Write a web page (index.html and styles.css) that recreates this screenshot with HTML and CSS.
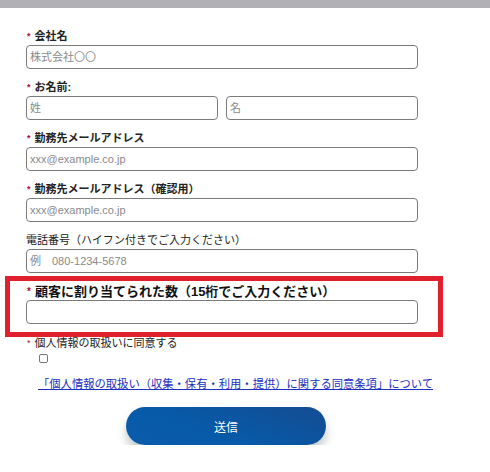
FILE: index.html
```html
<!DOCTYPE html>
<html lang="ja">
<head>
  <meta charset="UTF-8">
  <meta name="viewport" content="width=device-width, initial-scale=1.0">
  <title>お問い合わせ</title>
  <link rel="stylesheet" href="styles.css">
</head>
<body>
  <div class="topbar"></div>
  <form class="form">
    <div class="field">
      <label class="label"><span class="req">*</span>会社名</label>
      <input class="input" type="text" placeholder="株式会社〇〇">
    </div>
    <div class="field">
      <label class="label"><span class="req">*</span>お名前:</label>
      <div class="name-row">
        <input class="input" type="text" placeholder="姓">
        <input class="input" type="text" placeholder="名">
      </div>
    </div>
    <div class="field">
      <label class="label"><span class="req">*</span>勤務先メールアドレス</label>
      <input class="input" type="email" placeholder="xxx@example.co.jp">
    </div>
    <div class="field">
      <label class="label"><span class="req">*</span>勤務先メールアドレス（確認用）</label>
      <input class="input" type="email" placeholder="xxx@example.co.jp">
    </div>
    <div class="field field-tight">
      <label class="label label-plain">電話番号（ハイフン付きでご入力ください）</label>
      <input class="input" type="tel" placeholder="例　080-1234-5678">
    </div>
    <div class="highlight">
      <label class="label label-big"><span class="req">*</span>顧客に割り当てられた数（15桁でご入力ください）</label>
      <input class="input" type="text">
    </div>
    <div class="consent">
      <label class="label label-plain"><span class="req">*</span>個人情報の取扱いに同意する</label>
      <input class="check" type="checkbox">
      <a class="policy" href="#">「個人情報の取扱い（収集・保有・利用・提供）に関する同意条項」について</a>
    </div>
    <button class="submit" type="button">送信</button>
  </form>
</body>
</html>
```

FILE: styles.css
```css
*{
  margin:0;
  padding:0;
  box-sizing:border-box;
}
body{
  background:#fff;
  font-family:"Liberation Sans","Noto Sans CJK JP",sans-serif;
  font-size:11px;
  color:#222;
}
.topbar{
  height:8px;
  background:#b1b0b5;
}
.form{
  padding:20px 0 0 26px;
  width:452px;
}
.field{
  width:392px;
  margin-bottom:10px;
}
.field-tight{margin-bottom:3px;}

.label{
  display:block;
  height:17px;
  line-height:17px;
  font-weight:bold;
  white-space:nowrap;
}
.label-plain{font-weight:normal;}
.req{
  color:#b0102a;
  font-size:9px;
  margin:0 4px 0 1px;
  vertical-align:1px;
}
.input{
  display:block;
  width:100%;
  height:24px;
  border:1px solid #7a7a7a;
  border-radius:4px;
  padding:0 3px;
  font-family:inherit;
  font-size:11px;
  color:#222;
  background:#fff;
}
.input::placeholder{color:#8a8a8a;}

.name-row{
  display:flex;
  gap:8px;
}

.highlight{
  margin-left:-21px;
  width:438px;
  border:5px solid #e0202c;
  padding:2px 20px 8px 16px;
}
.label-big{
  font-size:13px;
  color:#111;
}
.label-big .req{font-size:10px;}

.consent{
  display:flex;
  flex-direction:column;
  align-items:flex-start;
}
.consent .label{
  height:13px;
  line-height:13px;
}
.check{
  appearance:none;
  width:9px;
  height:9px;
  border:1px solid #777;
  border-radius:2px;
  margin:4px 0 0 13px;
  background:#fff;
}
.policy{
  margin:13px 0 0 12px;
  line-height:16px;
  font-size:11.3px;
  color:#1d2fc0;
  white-space:nowrap;
}

.submit{
  display:block;
  width:200px;
  height:38px;
  margin:15px 0 0 100px;
  border:none;
  border-radius:19px;
  background:linear-gradient(200deg,#144c92 0%,#075aa8 60%,#0a5cab 100%);
  box-shadow:0 7px 10px rgba(60,80,80,0.3);
  color:#fff;
  font-family:inherit;
  font-size:12px;
  cursor:pointer;
}
```
